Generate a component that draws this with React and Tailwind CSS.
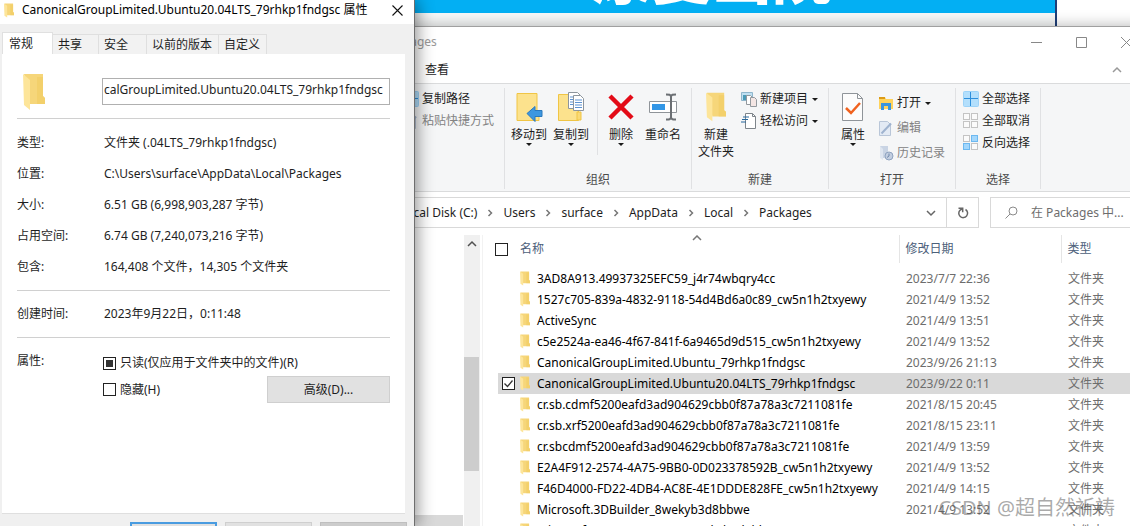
import React, { useState } from 'react';

const folders = [
  { name: '3AD8A913.49937325EFC59_j4r74wbqry4cc', date: '2023/7/7 22:36' },
  { name: '1527c705-839a-4832-9118-54d4Bd6a0c89_cw5n1h2txyewy', date: '2021/4/9 13:52' },
  { name: 'ActiveSync', date: '2021/4/9 13:51' },
  { name: 'c5e2524a-ea46-4f67-841f-6a9465d9d515_cw5n1h2txyewy', date: '2021/4/9 13:52' },
  { name: 'CanonicalGroupLimited.Ubuntu_79rhkp1fndgsc', date: '2023/9/26 21:13' },
  { name: 'CanonicalGroupLimited.Ubuntu20.04LTS_79rhkp1fndgsc', date: '2023/9/22 0:11' },
  { name: 'cr.sb.cdmf5200eafd3ad904629cbb0f87a78a3c7211081fe', date: '2021/8/15 20:45' },
  { name: 'cr.sb.xrf5200eafd3ad904629cbb0f87a78a3c7211081fe', date: '2021/8/15 23:11' },
  { name: 'cr.sbcdmf5200eafd3ad904629cbb0f87a78a3c7211081fe', date: '2021/4/9 13:59' },
  { name: 'E2A4F912-2574-4A75-9BB0-0D023378592B_cw5n1h2txyewy', date: '2021/4/9 13:52' },
  { name: 'F46D4000-FD22-4DB4-AC8E-4E1DDDE828FE_cw5n1h2txyewy', date: '2021/4/9 14:15' },
  { name: 'Microsoft.3DBuilder_8wekyb3d8bbwe', date: '2021/4/9 13:52' },
  { name: 'Microsoft.549981C3F5F10_8wekyb3d8bbwe', date: '2021/4/9 13:52' },
];

const crumbs = ['Local Disk (C:)', 'Users', 'surface', 'AppData', 'Local', 'Packages'];

const tabs = [
  { label: '共享', style: 'w-[46px]' },
  { label: '安全', style: 'w-12' },
  { label: '以前的版本', style: 'w-[72px]' },
  { label: '自定义', style: 'w-12' },
];

const details = [
  ['类型:', '文件夹 (.04LTS_79rhkp1fndgsc)'],
  ['位置:', 'C:\\Users\\surface\\AppData\\Local\\Packages'],
  ['大小:', '6.51 GB (6,998,903,287 字节)'],
  ['占用空间:', '6.74 GB (7,240,073,216 字节)'],
  ['包含:', '164,408 个文件，14,305 个文件夹'],
];

// Folder seen from the side, used in every size
const FolderIcon = ({ className }) => (
  <svg viewBox="0 0 22 38" preserveAspectRatio="none" className={className} aria-hidden="true">
    <path d="M1 1h19v22l2 2v6H7z" fill="#f6d67a" />
    <path d="M14 4h6v19l2 2v6h-8z" fill="#f2cb61" opacity=".6" />
    <path d="M0 1l7 6v30L1 32z" fill="#fde59a" />
  </svg>
);

const MoveIcon = () => (
  <svg width="28" height="30" viewBox="0 0 28 30" aria-hidden="true">
    <path d="M2 1.500h20v19h2v8H2z" fill="#fce28d" stroke="#f0c545" />
    <path d="M12 21.500l8-7v4h7v6h-7v5z" fill="#3d97e0" stroke="#2a78bd" />
  </svg>
);

const CopyIcon = () => (
  <svg width="28" height="30" viewBox="0 0 28 30" aria-hidden="true">
    <path d="M1.500 2.500h20v26h-20z" fill="#fce28d" stroke="#f0c545" />
    <path d="M20 20h4v8h-4z" fill="#f9d976" stroke="#f0c545" />
    <path d="M11.500.500h9l3 3v13h-12z" fill="#fff" stroke="#8d959c" />
    <path d="M13 5h5M13 7.500h5M13 10h5M13 12.500h5" stroke="#5e93d1" />
    <path d="M16.500 3.500h7l3 3v12h-10z" fill="#fff" stroke="#8d959c" />
    <path d="M18 8h7M18 10.500h7M18 13h7M18 15.500h7" stroke="#5e93d1" />
  </svg>
);

const DeleteIcon = () => (
  <svg width="28" height="30" viewBox="0 0 28 30" aria-hidden="true">
    <path d="M3 4l22 22M25 4L3 26" stroke="#e30b17" strokeWidth="4.500" />
  </svg>
);

const RenameIcon = () => (
  <svg width="28" height="30" viewBox="0 0 28 30" fill="none" aria-hidden="true">
    <path d="M.500 9.500h27v11H.500z" fill="#fff" stroke="#8f9499" />
    <path d="M3 12h13v6H3z" fill="#3296e6" />
    <path d="M17 2.500c3 0 5 0 5 2.500 0-2.500 2-2.500 5-2.500M22 5v20M17 27.500c3 0 5 0 5-2.500 0 2.500 2 2.500 5 2.500" stroke="#6b6f73" strokeWidth="2" />
  </svg>
);

const PropertiesIcon = () => (
  <svg width="28" height="30" viewBox="0 0 28 30" fill="none" aria-hidden="true">
    <path d="M3.500 1.500h15l5 5v22h-20z" fill="#fcfcfc" stroke="#8f9499" />
    <path d="M18.500 1.500v5h5" stroke="#8f9499" />
    <path d="M7 16l5 5 9-10" stroke="#f0621f" strokeWidth="2.500" />
  </svg>
);

const NewItemIcon = () => (
  <svg width="16" height="16" viewBox="0 0 16 16" aria-hidden="true">
    <path d="M.500 1.500h11v8H.500z" fill="#bfe0f2" stroke="#8fb6cc" />
    <path d="M2 4h4v5H2z" fill="#4c9bb8" />
    <path d="M5.500 4.500h4l2 2v7h-6z" fill="#fff" stroke="#93999e" />
    <path d="M9.500 6.500h4l2 2v7h-6z" fill="#f4e6e4" stroke="#93999e" />
  </svg>
);

const EasyAccessIcon = () => (
  <svg width="16" height="16" viewBox="0 0 16 16" fill="none" aria-hidden="true">
    <path d="M4.500.500h7l3 3v12h-10z" fill="#fff" stroke="#7e858b" />
    <path d="M11.500.500v3h3" stroke="#7e858b" />
    <path d="M2 4h6M1 6.500h6M0 9h5" stroke="#28699e" />
  </svg>
);

const OpenIcon = () => (
  <svg width="16" height="16" viewBox="0 0 16 16" aria-hidden="true">
    <path d="M1 2h6l1 2h7v10H1z" fill="#ffd35c" />
    <path d="M1 2h6v2H1z" fill="#dc9b16" />
    <path d="M3 15V8h10v7h-3v-4H6v4z" fill="#3a95de" />
  </svg>
);

const EditIcon = () => (
  <svg width="16" height="16" viewBox="0 0 16 16" aria-hidden="true">
    <path d="M1.500 1.500h8l3 3v11h-11z" fill="#e3eaf4" stroke="#b9c6d8" />
    <path d="M3.500 13.500L13 3.500" stroke="#9fb3cf" strokeWidth="2" />
  </svg>
);

const HistoryIcon = () => (
  <svg width="16" height="16" viewBox="0 0 16 16" fill="none" aria-hidden="true">
    <path d="M2 1h8v12H5L2 11z" fill="#c9d4e4" />
    <path d="M2 1l3 3v11l-3-2z" fill="#dfe6f0" />
    <circle cx="11" cy="11" r="4" fill="#c2cee0" stroke="#8fa3c0" />
    <path d="M11 8.500V11l-2 1.500" stroke="#7189ac" />
  </svg>
);

// Four squares, each one either picked or empty
const SquaresIcon = ({ fills }) => (
  <svg width="16" height="16" viewBox="0 0 16 16" aria-hidden="true">
    {fills.map((on, i) => (
      <rect
        key={i}
        x={i % 2 ? 8.5 : 0.5}
        y={i > 1 ? 8.5 : 0.5}
        width="6"
        height="6"
        fill={on ? '#a3d7fc' : '#fbfbfb'}
        stroke={on ? '#6cb8f0' : '#c4c4c4'}
      />
    ))}
  </svg>
);

const SelectAllIcon = () => (
  <svg width="16" height="16" viewBox="0 0 16 16" fill="none" aria-hidden="true">
    <rect x=".5" y=".5" width="15" height="15" rx="1" fill="#b3dffc" stroke="#9dd3f8" />
    <path d="M7.500 1v14M1 7.500h14" stroke="#2d8fdc" />
  </svg>
);

const Caret = () => (
  <svg width="6" height="3" viewBox="0 0 6 3" className="shrink-0" aria-hidden="true">
    <path d="M0 0h6L3 3z" fill="#1a1a1a" />
  </svg>
);

const Chevron = ({ d, className = 'text-[#777]', size = 10 }) => (
  <svg width={size} height={size} viewBox="0 0 10 10" fill="none" stroke="currentColor" strokeWidth="1.500" className={className} aria-hidden="true">
    <path d={d} />
  </svg>
);

const BigButton = ({ icon, label, caret }) => (
  <button className="flex w-[42px] flex-col items-center">
    <span className="flex h-[30px] items-center">{icon}</span>
    <span className="mt-1 whitespace-pre leading-[17px]">{label}</span>
    {caret && <Caret />}
  </button>
);

const SmallButton = ({ icon, label, caret, disabled }) => (
  <button disabled={disabled} className="flex h-[22px] items-center whitespace-nowrap disabled:text-[#838383]">
    {icon}
    <span className="ml-[3px]">{label}</span>
    {caret && <span className="ml-1"><Caret /></span>}
  </button>
);

const RibbonGroup = ({ title, className, children }) => (
  <div className={`flex flex-col border-r border-[#e0e1e3] ${className}`}>
    <div className="flex flex-1">{children}</div>
    <div className="h-[18px] text-center leading-[18px] text-[#4c4c4c]">{title}</div>
  </div>
);

const Ribbon = () => (
  <div className="flex h-[109px] border-y border-[#dadbdc] bg-[#f5f6f7] pb-0.5 pt-1">
    <RibbonGroup className="w-[205px]">
      <div className="ml-[103px]">
        <SmallButton icon={<SelectAllIcon />} label="复制路径" />
        <SmallButton disabled icon={<EditIcon />} label="粘贴快捷方式" />
      </div>
    </RibbonGroup>
    <RibbonGroup title="组织" className="w-[187px]">
      <div className="ml-[3px] flex pt-1">
        <BigButton icon={<MoveIcon />} label="移动到" caret />
        <BigButton icon={<CopyIcon />} label="复制到" caret />
        <div className="ml-[5px] mr-0.5 mt-2 h-[55px] w-px bg-[#e0e1e3]" />
        <BigButton icon={<DeleteIcon />} label="删除" caret />
        <BigButton icon={<RenameIcon />} label="重命名" />
      </div>
    </RibbonGroup>
    <RibbonGroup title="新建" className="w-[137px]">
      <div className="ml-[3px] pt-1">
        <BigButton icon={<FolderIcon className="h-[30px] w-5" />} label={'新建\n文件夹'} />
      </div>
      <div className="ml-1">
        <SmallButton icon={<NewItemIcon />} label="新建项目" caret />
        <SmallButton icon={<EasyAccessIcon />} label="轻松访问" caret />
      </div>
    </RibbonGroup>
    <RibbonGroup title="打开" className="w-[127px]">
      <div className="ml-[3px] pt-1">
        <BigButton icon={<PropertiesIcon />} label="属性" caret />
      </div>
      <div className="ml-1 flex flex-col gap-[3px] pt-1">
        <SmallButton icon={<OpenIcon />} label="打开" caret />
        <SmallButton disabled icon={<EditIcon />} label="编辑" />
        <SmallButton disabled icon={<HistoryIcon />} label="历史记录" />
      </div>
    </RibbonGroup>
    <RibbonGroup title="选择" className="w-[85px]">
      <div className="ml-[7px]">
        <SmallButton icon={<SelectAllIcon />} label="全部选择" />
        <SmallButton icon={<SquaresIcon fills={[false, false, false, false]} />} label="全部取消" />
        <SmallButton icon={<SquaresIcon fills={[false, true, true, false]} />} label="反向选择" />
      </div>
    </RibbonGroup>
  </div>
);

const AddressBar = () => (
  <div className="mt-[5px] flex h-[31px] gap-[11px]">
    <nav className="flex flex-1 items-center border border-[#d9d9d9] pl-[99px]">
      {crumbs.map((crumb, i) => (
        <React.Fragment key={crumb}>
          {i > 0 && (
            <span className="flex w-[26px] justify-center">
              <Chevron d="M3.500 2l3 3-3 3" />
            </span>
          )}
          <a href="#" className="whitespace-nowrap">{crumb}</a>
        </React.Fragment>
      ))}
      <button className="ml-auto flex w-[31px] justify-center" aria-label="history">
        <Chevron d="M1 3l4 4 4-4" className="text-[#666]" />
      </button>
      <button className="flex h-full w-8 items-center justify-center border-l border-[#d9d9d9]" aria-label="refresh">
        <svg width="12" height="12" viewBox="0 0 12 12" fill="none" stroke="#666" strokeWidth="1.500" aria-hidden="true">
          <path d="M8.500 2.500A4.400 4.400 0 1 1 3.200 3L5.500 1.500" />
          <path d="M1.500 1.200h4.200v4" />
        </svg>
      </button>
    </nav>
    <label className="flex w-[159px] items-center border border-[#d9d9d9] pl-[14px]">
      <svg width="13" height="13" viewBox="0 0 13 13" fill="none" stroke="#8a8a8a" aria-hidden="true">
        <circle cx="8" cy="5" r="4" />
        <path d="M5 8l-4.500 4.500" />
      </svg>
      <input
        type="search"
        aria-label="search"
        placeholder="在 Packages 中..."
        className="ml-[13px] w-[112px] outline-none placeholder:text-[#6d6d6d]"
      />
    </label>
  </div>
);

const Check = ({ checked, onChange, label }) => (
  <input
    type="checkbox"
    aria-label={label}
    checked={checked}
    onChange={onChange}
    className="block h-[13px] w-[13px] appearance-none border border-[#222] bg-white"
  />
);

const FileList = () => {
  const [selected, setSelected] = useState(5);

  return (
    <table className="ml-[15px] w-[651px] table-fixed self-start border-collapse text-left">
      <colgroup>
        <col className="w-[22px]" />
        <col className="w-[379px]" />
        <col className="w-[162px]" />
        <col />
      </colgroup>
      <thead className="text-[#4c607a]">
        <tr className="h-7">
          <th className="font-normal">
            <span className="-ml-[3px] block">
              <Check label="select all" checked={false} onChange={() => setSelected(-1)} />
            </span>
          </th>
          <th className="relative border-r border-[#e5e5e5] font-normal">
            名称
            <span className="absolute -top-0.5 left-[172px]"><Chevron d="M1 7l4-4 4 4" /></span>
          </th>
          <th className="border-r border-[#e5e5e5] pl-1.5 font-normal">修改日期</th>
          <th className="pl-1.5 font-normal">类型</th>
        </tr>
      </thead>
      <tbody>
        <tr className="h-[5px]" />
        {folders.map((folder, i) => (
          <tr key={folder.name} onClick={() => setSelected(i)} className={i === selected ? 'h-[21px] bg-[#d9d9d9]' : 'h-[21px]'}>
            <td className="pl-1">
              {i === selected && (
                <span className="relative block">
                  <Check label={folder.name} checked onChange={() => setSelected(-1)} />
                  <svg width="13" height="13" viewBox="0 0 13 13" fill="none" stroke="#333" strokeWidth="1.300" className="pointer-events-none absolute left-0 top-0" aria-hidden="true">
                    <path d="M2.500 6.500l3 3 5-6" />
                  </svg>
                </span>
              )}
            </td>
            <td className="whitespace-nowrap leading-[21px]">
              <span className="flex items-center gap-[7px] text-black">
                <FolderIcon className="h-[15px] w-2.5" />
                {folder.name}
              </span>
            </td>
            <td className="pl-[7px] text-[#6d6d6d]">{folder.date}</td>
            <td className="pl-[7px] text-[#6d6d6d]">文件夹</td>
          </tr>
        ))}
      </tbody>
    </table>
  );
};

const ExplorerWindow = () => (
  <div className="absolute -right-[19px] bottom-0 left-[300px] top-[26px] flex flex-col border-t border-[#a0a0a0] bg-white shadow-[0_0_14px_rgba(0,0,0,0.3)]">
    <div className="flex h-[30px] items-center">
      <span className="ml-[84px] text-[#999]">Packages</span>
      <div className="ml-auto flex text-[#888]">
        <button className="flex w-[45px] justify-center" aria-label="minimize">
          <svg width="11" height="11" stroke="currentColor"><path d="M0 5.500h11" /></svg>
        </button>
        <button className="flex w-[45px] justify-center" aria-label="maximize">
          <svg width="11" height="11" fill="none" stroke="currentColor"><path d="M.500.500h10v10H.500z" /></svg>
        </button>
        <button className="flex w-[45px] justify-center" aria-label="close">
          <svg width="11" height="11" stroke="currentColor"><path d="M0 0l11 11M11 0L0 11" /></svg>
        </button>
      </div>
    </div>
    <div className="flex h-[26px] items-center justify-between pl-[125px] pr-[27px]">
      <button>查看</button>
      <button aria-label="collapse"><Chevron d="M1 7l4-4 4 4" className="text-[#999]" /></button>
    </div>
    <Ribbon />
    <AddressBar />
    <div className="mt-[7px] flex min-h-0 flex-1 overflow-hidden">
      <div className="flex w-[163px] flex-col justify-end">
        <div className="h-[11px] bg-[#d9d9d9]" />
      </div>
      <div className="ml-px flex w-4 flex-col bg-[#f0f0f0]">
        <span className="flex h-[17px] items-center justify-center">
          <Chevron d="M1 7l4-4 4 4" className="text-[#505050]" />
        </span>
        <div className="mt-[105px] h-[114px] w-[15px] bg-[#cdcdcd]" />
      </div>
      <div className="ml-0.5 w-px bg-[#f2f2f2]" />
      <FileList />
    </div>
  </div>
);

const PropertiesDialog = () => {
  const [readOnly, setReadOnly] = useState(true);
  const [hidden, setHidden] = useState(false);

  return (
    <div className="absolute bottom-0 left-0 top-0 flex w-[415px] flex-col overflow-y-clip border-r border-[#6e6e6e] bg-[#f0f0f0] shadow-[2px_0_16px_rgba(0,0,0,0.45)]">
      <div className="flex h-6 shrink-0 items-center bg-white pb-1 pl-1 text-black">
        <FolderIcon className="h-[15px] w-2.5" />
        <span className="ml-2 whitespace-nowrap">CanonicalGroupLimited.Ubuntu20.04LTS_79rhkp1fndgsc 属性</span>
        <button className="ml-auto mr-[11px]" aria-label="close">
          <svg width="11" height="11" stroke="#111" strokeWidth="1.100"><path d="M.500.500l10 10M10.500.500l-10 10" /></svg>
        </button>
      </div>
      <div className="ml-0.5 mt-2 flex h-[22px] shrink-0 items-end">
        <button className="h-[22px] w-[51px] border-x border-t border-[#e0e0e0] bg-white pl-1.5 text-left">常规</button>
        {tabs.map((tab) => (
          <button key={tab.label} className={`h-5 whitespace-nowrap border-r border-t border-[#dfdfdf] bg-[#f2f2f2] pl-[5px] text-left ${tab.style}`}>
            {tab.label}
          </button>
        ))}
      </div>
      <div className="ml-0.5 mr-[9px] h-[460px] shrink-0 border-b border-[#dfdfdf] bg-white px-[15px]">
        <div className="flex h-[65px] items-end border-b border-[#d0d0d0] pb-[7px]">
          <FolderIcon className="ml-1.5 h-[38px] w-[22px]" />
          <input
            type="text"
            aria-label="name"
            defaultValue="calGroupLimited.Ubuntu20.04LTS_79rhkp1fndgsc"
            className="mb-1.5 ml-auto h-[27px] w-72 border border-[#b0b0b0] pb-1 pl-px outline-none"
          />
        </div>
        <dl className="border-b border-[#d0d0d0] py-2">
          {details.map(([term, value]) => (
            <div key={term} className="flex h-[31px] items-center">
              <dt className="w-[87px]">{term}</dt>
              <dd>{value}</dd>
            </div>
          ))}
        </dl>
        <dl className="flex h-[47px] items-center border-b border-[#d0d0d0]">
          <dt className="w-[87px]">创建时间:</dt>
          <dd>2023年9月22日，0:11:48</dd>
        </dl>
        <div className="flex pt-[14px]">
          <span className="w-[86px] leading-[18px]">属性:</span>
          <div className="flex flex-1 flex-col">
            <label className="flex items-center gap-1 pt-0.5 leading-[18px]">
              <span className="relative">
                <Check label="read only" checked={readOnly} onChange={() => setReadOnly(!readOnly)} />
                {readOnly && <span className="pointer-events-none absolute left-[3px] top-[3px] h-[7px] w-[7px] bg-[#333]" />}
              </span>
              只读(仅应用于文件夹中的文件)(R)
            </label>
            <div className="mt-1 flex items-center justify-between">
              <label className="flex items-center gap-1">
                <Check label="hidden" checked={hidden} onChange={() => setHidden(!hidden)} />
                隐藏(H)
              </label>
              <button className="h-[27px] w-[123px] border border-[#cfcfcf] bg-[#e1e1e1]">高级(D)...</button>
            </div>
          </div>
        </div>
      </div>
      <div className="ml-[130px] mt-2 flex h-7 shrink-0 gap-2">
        <button className="w-[87px] border-2 border-[#4a9ce0] bg-[#e1e1e1]" aria-label="ok" />
        <button className="w-[87px] border border-[#cfcfcf] bg-[#e1e1e1]" aria-label="cancel" />
        <button className="w-[87px] border border-[#bfbfbf] bg-[#cccccc]" aria-label="apply" />
      </div>
    </div>
  );
};

const App = () => (
  <div className="relative h-screen overflow-hidden bg-white font-['Noto_Sans','Noto_Sans_CJK_SC',sans-serif] text-xs text-[#1e1e1e]">
    {/* Page behind the windows */}
    <div className="mr-[73px] h-[30px] border-r-2 border-[#1f3f78] bg-[#f6f8f8]">
      <div className="flex h-[13px] items-end overflow-hidden bg-[#03aff3] pl-[592px]">
        <span className="mb-2.5 whitespace-nowrap text-[60px] font-black leading-[54px] text-white">康复出院</span>
      </div>
    </div>
    <ExplorerWindow />
    <PropertiesDialog />
    <div className="pointer-events-none absolute bottom-1 right-[15px] text-xl text-[#555]/50">CSDN @超自然祈祷</div>
  </div>
);

export default App;
